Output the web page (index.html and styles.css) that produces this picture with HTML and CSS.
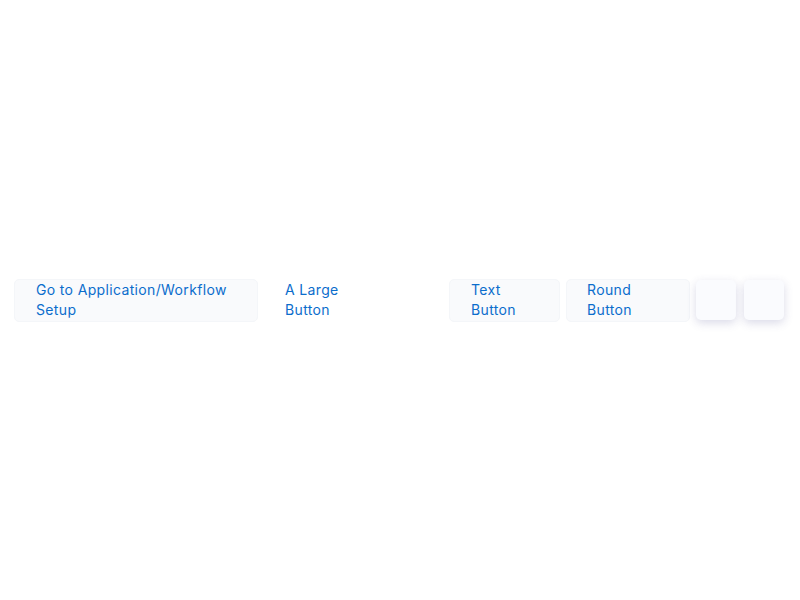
FILE: index.html
```html
<!DOCTYPE html>
<html>
<head>
<meta charset="utf-8">
<link rel="stylesheet" href="styles.css">
</head>
<body>
<div class="page">
  <div class="row">
    <button class="btn btn-wide"><span class="label">Go to Application/Workflow Setup</span></button>
    <button class="btn btn-large btn-plain"><span class="label label-narrow">A Large Button</span></button>
    <button class="btn btn-text"><span class="label label-narrow">Text Button</span></button>
    <button class="btn btn-round"><span class="label label-narrow">Round Button</span></button>
    <button class="sq"></button>
    <button class="sq sq-last"></button>
  </div>
</div>
</body>
</html>
```
FILE: styles.css
```css
html, body {
  margin: 0;
  padding: 0;
  background: #ffffff;
}
.page {
  height: 600px;
  display: flex;
  align-items: center;
}
.row {
  display: flex;
  align-items: center;
  gap: 6px;
  padding-left: 14px;
}
.btn {
  box-sizing: border-box;
  height: 43px;
  margin: 0;
  padding: 0 8px 0 21px;
  border: 1px solid #f4f6f9;
  border-radius: 5px;
  background: #f9fafc;
  color: #0b6dcc;
  font-family: Inter, "Noto Sans", sans-serif;
  font-size: 14px;
  line-height: 20px;
  letter-spacing: 0.35px;
  text-align: left;
  cursor: pointer;
}
.label { display: block; }
.label-narrow { max-width: 70px; }
.btn-wide { width: 244px; }
.btn-large { width: 179px; padding-left: 20px; }
.btn-plain { background: transparent; border-color: transparent; }
.btn-text { width: 111px; }
.btn-round { width: 124px; padding-left: 20px; }
.sq {
  box-sizing: border-box;
  width: 40px;
  height: 40px;
  margin: 0;
  padding: 0;
  border: none;
  border-radius: 5px;
  background: #fafbfe;
  box-shadow: 0 3px 10px rgba(70, 72, 140, 0.2);
}
.sq-last { margin-left: 2px; }
```
